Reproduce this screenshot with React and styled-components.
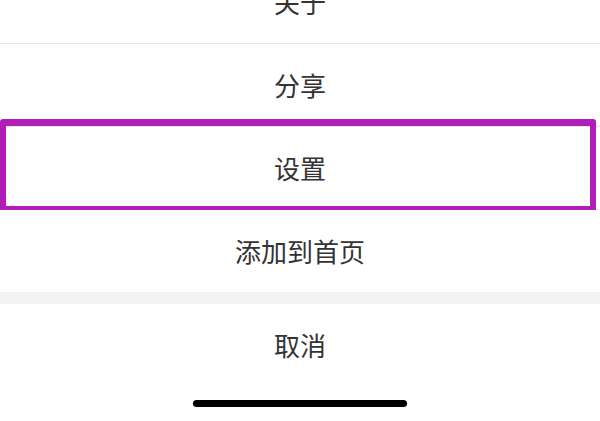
import React from "react";
import styled, { createGlobalStyle } from "styled-components";

const Global = createGlobalStyle`
  html, body { margin: 0; padding: 0; background: #ffffff; }
  body { font-family: "Noto Sans CJK SC", "Noto Sans", sans-serif; }
  #root { width: 600px; height: 421px; overflow: hidden; }
`;

const Sheet = styled.div`
  width: 600px;
  height: 421px;
  overflow: hidden;
  display: flex;
  flex-direction: column;
  background: #ffffff;
`;

const Menu = styled.div`
  display: flex;
  flex-direction: column;
  margin-top: -39px;
`;

const Row = styled.div`
  position: relative;
  height: 82px;
  display: flex;
  align-items: center;
  justify-content: center;
  font-size: 26px;
  color: #333333;
  border-bottom: ${(p) => (p.$last ? "none" : "1px solid #e6e6e6")};
  background: #ffffff;
`;

const Label = styled.span`
  line-height: 1;
  transform: translateY(${(p) => p.$shift || 0}px);
`;

const Highlight = styled.div`
  position: absolute;
  top: -8px;
  left: 0;
  right: 4px;
  bottom: -3px;
  border: 6px solid #b11db8;
  border-top-width: 7px;
  border-radius: 3px;
  pointer-events: none;
`;

const Gap = styled.div`
  height: 12px;
  background: #f3f3f3;
  flex-shrink: 0;
`;

const HomeArea = styled.div`
  flex: 1;
  display: flex;
  justify-content: center;
  padding-top: 14px;
`;

const HomeBar = styled.div`
  width: 214px;
  height: 7px;
  border-radius: 4px;
  background: #000000;
`;

const items = [
  { label: "关于" },
  { label: "分享" },
  { label: "设置", highlighted: true },
  { label: "添加到首页", last: true },
];

export default function App() {
  return (
    <>
      <Global />
      <Sheet>
        <Menu>
          {items.map((it) => (
            <Row key={it.label} $last={it.last}>
              <Label>{it.label}</Label>
              {it.highlighted && <Highlight />}
            </Row>
          ))}
        </Menu>
        <Gap />
        <Row $last>
          <Label>取消</Label>
        </Row>
        <HomeArea>
          <HomeBar />
        </HomeArea>
      </Sheet>
    </>
  );
}
